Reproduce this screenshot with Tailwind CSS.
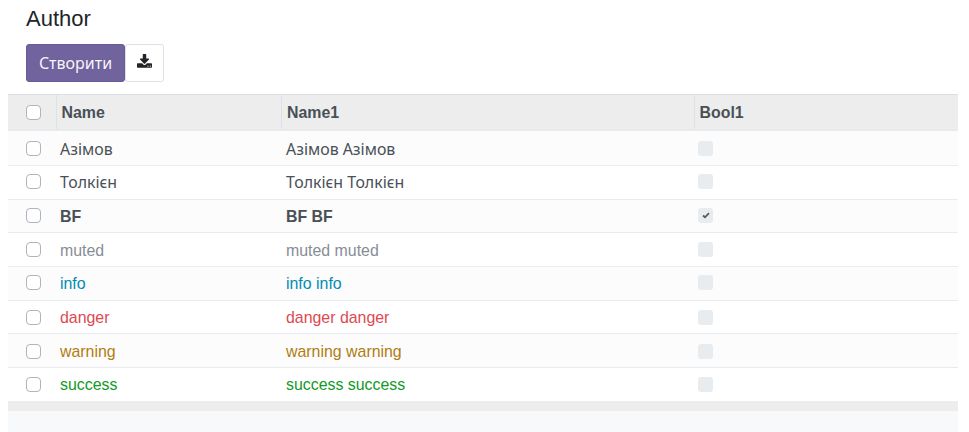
<!DOCTYPE html>
<html lang="uk">
<head>
<meta charset="utf-8">
<title>Author</title>
<script src="https://cdn.jsdelivr.net/npm/@tailwindcss/browser@4"></script>
</head>
<body class="bg-white h-[432px] overflow-hidden font-['Liberation_Sans','Noto_Sans',sans-serif] text-[15.9px] text-[#495057]">
<div class="ml-2 w-[950px] h-[432px] flex flex-col">
  <header class="h-[94px] pl-[18px] pt-[5px] flex flex-col shrink-0">
    <h1 class="text-[22px] leading-[28px] text-[#212529]">Author</h1>
    <div class="flex mt-[10.5px]">
      <button class="w-[99px] h-[38px] rounded-[3px] border border-[#6a5b96] bg-[#71639e] text-white/95 font-['Noto_Sans',sans-serif] text-[16px] leading-none pt-px">Створити</button>
      <button aria-label="Export" class="w-[39px] h-[38px] rounded-[3px] border border-[#dee2e6] bg-white flex items-center justify-center">
        <svg class="w-[15px] h-[15px] -translate-y-px overflow-visible" viewBox="0 -64 1664 1536" fill="#212529"><path d="M1280 1216q0-26-19-45t-45-19-45 19-19 45 19 45 45 19 45-19 19-45zm256 0q0-26-19-45t-45-19-45 19-19 45 19 45 45 19 45-19 19-45zm128-224v320q0 40-28 68t-68 28H96q-40 0-68-28t-28-68V992q0-40 28-68t68-28h465l135 136q58 56 136 56t136-56l136-136h464q40 0 68 28t28 68zm-325-569q17 41-14 70l-448 448q-18 19-45 19t-45-19L339 493q-31-29-14-70 17-39 59-39h256V-64q0-26 19-45t45-19h256q26 0 45 19t19 45v448h256q42 0 59 39z"/></svg>
      </button>
    </div>
  </header>
  <div class="grid grid-cols-[48.5px_225.5px_412.5px_263.5px] h-[37px] shrink-0 border-t border-t-[#dadfe4] border-b-2 border-b-[#e7ebee] bg-[#ededed] font-bold text-[#495057]">
    <div class="pt-[10px] pl-[18px] border-r border-[#dee2e6]"><span class="block size-[15px] rounded-[4px] border border-[#adb5bd] bg-white"></span></div>
    <div class="pt-[8px] leading-[20px] pl-[5px] border-r border-[#dee2e6]">Name</div>
    <div class="pt-[8px] leading-[20px] pl-[5px] border-r border-[#dee2e6]">Name1</div>
    <div class="pt-[8px] leading-[20px] pl-[5px]">Bool1</div>
  </div>
  <div id="rows" class="shrink-0"></div>
  <div class="h-[10px] bg-[#ededed] shrink-0"></div>
  <div class="flex-1 bg-[#f8f9fa]"></div>
</div>
<script>
const rows = [
  ["Азімов", "h-[35px] font-['Noto_Sans',sans-serif]", "pt-[10px]", "pt-[8px]"],
  ["Толкієн", "h-[34px] font-['Noto_Sans',sans-serif]", "pt-[8px]", "pt-[6px]"],
  ["BF", "h-[33px] font-bold", "pt-[8px]", "pt-[7px]", true],
  ["muted", "h-[34px] text-[#878d96]", "pt-[9px]", "pt-[8px]"],
  ["info", "h-[34px] text-[#008db3]", "pt-[8px]", "pt-[7px]"],
  ["danger", "h-[33px] text-[#dc4a4f]", "pt-[9px]", "pt-[7px]"],
  ["warning", "h-[34px] text-[#b07d12]", "pt-[10px]", "pt-[8px]"],
  ["success", "h-[33px] text-[#109a28]", "pt-[9px]", "pt-[7px]"]
];
document.getElementById("rows").innerHTML = rows.map(([name, cls, box, text, on], i) => `
  <div class="grid grid-cols-[48px_226px_412px_264px] ${i === 7 ? "" : "border-b border-[#e9ecef]"} ${i % 2 ? "bg-white" : "bg-[#fcfcfc]"} ${cls}">
    <div class="pl-[18px] ${box}"><span class="block size-[15px] rounded-[4px] border border-[#adb5bd] bg-white"></span></div>
    <div class="pl-[4px] leading-[20px] ${text}">${name}</div>
    <div class="pl-[4px] leading-[20px] ${text}">${name} ${name}</div>
    <div class="pl-[4px] ${box}"><span class="flex items-center justify-center size-[15px] rounded-[3px] bg-[#e9ecef]">${on ? '<svg class="w-[8px] h-[7px]" viewBox="0 0 8 7"><path d="M1 3.5 3 5.3 7 1.2" fill="none" stroke="#5c5c5c" stroke-width="1.9"/></svg>' : ""}</span></div>
  </div>`).join("");
</script>
</body>
</html>
